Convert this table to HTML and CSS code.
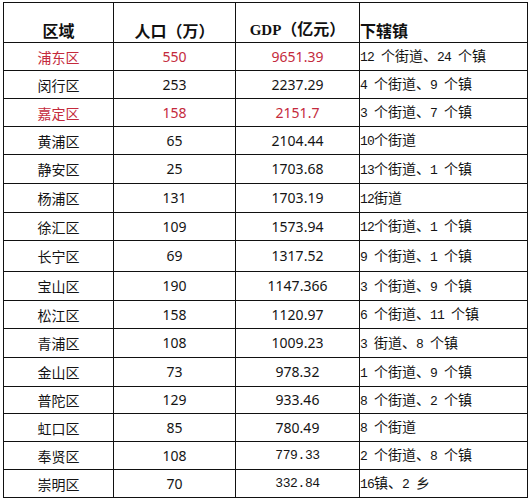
FILE: index.html
```html
<!DOCTYPE html>
<html lang="zh-CN">
<head>
<meta charset="utf-8">
<link rel="stylesheet" href="styles.css">
</head>
<body>
<table class="t">
  <colgroup>
    <col class="c1"><col class="c2"><col class="c3"><col class="c4">
  </colgroup>
  <thead>
    <tr class="hd">
      <th class="ca">区域</th>
      <th class="ca">人口（万）</th>
      <th class="ca"><span class="lat">GDP</span>（亿元）</th>
      <th class="cl">下辖镇</th>
    </tr>
  </thead>
  <tbody>
    <tr class="red"><td class="nm">浦东区</td><td class="num">550</td><td class="num">9651.39</td><td class="tw"><span class="d">12 </span>个街道、<span class="d">24 </span>个镇</td></tr>
    <tr><td class="nm">闵行区</td><td class="num">253</td><td class="num">2237.29</td><td class="tw"><span class="d">4 </span>个街道、<span class="d">9 </span>个镇</td></tr>
    <tr class="red"><td class="nm">嘉定区</td><td class="num">158</td><td class="num">2151.7</td><td class="tw"><span class="d">3 </span>个街道、<span class="d">7 </span>个镇</td></tr>
    <tr><td class="nm">黄浦区</td><td class="num">65</td><td class="num">2104.44</td><td class="tw"><span class="d">10</span>个街道</td></tr>
    <tr><td class="nm">静安区</td><td class="num">25</td><td class="num">1703.68</td><td class="tw"><span class="d">13</span>个街道、<span class="d">1 </span>个镇</td></tr>
    <tr><td class="nm">杨浦区</td><td class="num">131</td><td class="num">1703.19</td><td class="tw"><span class="d">12</span>街道</td></tr>
    <tr><td class="nm">徐汇区</td><td class="num">109</td><td class="num">1573.94</td><td class="tw"><span class="d">12</span>个街道、<span class="d">1 </span>个镇</td></tr>
    <tr class="tall"><td class="nm">长宁区</td><td class="num">69</td><td class="num">1317.52</td><td class="tw"><span class="d">9 </span>个街道、<span class="d">1 </span>个镇</td></tr>
    <tr><td class="nm">宝山区</td><td class="num">190</td><td class="num">1147.366</td><td class="tw"><span class="d">3 </span>个街道、<span class="d">9 </span>个镇</td></tr>
    <tr><td class="nm">松江区</td><td class="num">158</td><td class="num">1120.97</td><td class="tw"><span class="d">6 </span>个街道、<span class="d">11 </span>个镇</td></tr>
    <tr><td class="nm">青浦区</td><td class="num">108</td><td class="num">1009.23</td><td class="tw"><span class="d">3 </span>街道、<span class="d">8 </span>个镇</td></tr>
    <tr><td class="nm">金山区</td><td class="num">73</td><td class="num">978.32</td><td class="tw"><span class="d">1 </span>个街道、<span class="d">9 </span>个镇</td></tr>
    <tr><td class="nm">普陀区</td><td class="num">129</td><td class="num">933.46</td><td class="tw"><span class="d">8 </span>个街道、<span class="d">2 </span>个镇</td></tr>
    <tr><td class="nm">虹口区</td><td class="num">85</td><td class="num">780.49</td><td class="tw"><span class="d">8 </span>个街道</td></tr>
    <tr><td class="nm">奉贤区</td><td class="num">108</td><td class="num mono">779.33</td><td class="tw"><span class="d">2 </span>个街道、<span class="d">8 </span>个镇</td></tr>
    <tr><td class="nm">崇明区</td><td class="num">70</td><td class="num mono">332.84</td><td class="tw"><span class="d">16</span>镇、<span class="d">2 </span>乡</td></tr>
  </tbody>
</table>
</body>
</html>
```

FILE: styles.css
```css
html, body {
  margin: 0;
  padding: 0;
  background: #ffffff;
}

body {
  padding: 2px 0 0 3px;
  font-family: "Noto Sans CJK SC", "Noto Sans", sans-serif;
  color: #141414;
}

.t {
  border-collapse: collapse;
  table-layout: fixed;
  width: 524px;
}

.c1 { width: 110px; }
.c2 { width: 122px; }
.c3 { width: 124px; }
.c4 { width: 168px; }

.t th,
.t td {
  border: 1px solid #111;
  padding: 0;
  white-space: nowrap;
  overflow: hidden;
}

.hd { height: 40px; }

.t th {
  font-size: 16px;
  font-weight: 700;
  vertical-align: bottom;
  padding-bottom: 2px;
  line-height: 20px;
  color: #111;
}

.t th.ca { text-align: center; }
.t th.cl { text-align: left; padding-left: 0; }

.lat {
  font-family: "Liberation Serif", serif;
  font-weight: 700;
  font-size: 15px;
}

.t tbody tr { height: 28px; }
.t tbody tr:nth-child(5),
.t tbody tr:nth-child(6),
.t tbody tr:nth-child(9),
.t tbody tr:nth-child(11),
.t tbody tr:nth-child(12) { height: 29px; }
.t tbody tr.tall { height: 31px; }
.t tbody tr:nth-child(13) { height: 27px; }

.t td {
  font-size: 14px;
  line-height: 18px;
  vertical-align: middle;
}

.nm {
  text-align: center;
  font-family: "Noto Sans CJK SC", sans-serif;
}

.num {
  text-align: center;
  font-family: "Noto Sans", "DejaVu Sans", sans-serif;
  font-size: 15px;
}

.num.mono {
  font-family: "Liberation Mono", monospace;
  font-size: 13px;
  letter-spacing: -0.4px;
}

.tw {
  text-align: left;
  padding-left: 1px;
  font-family: "Noto Sans CJK SC", sans-serif;
}

.d {
  font-family: "Liberation Mono", monospace;
  font-size: 13px;
  letter-spacing: -0.8px;
}

.red .nm,
.red .num { color: #c42a3c; }
```
